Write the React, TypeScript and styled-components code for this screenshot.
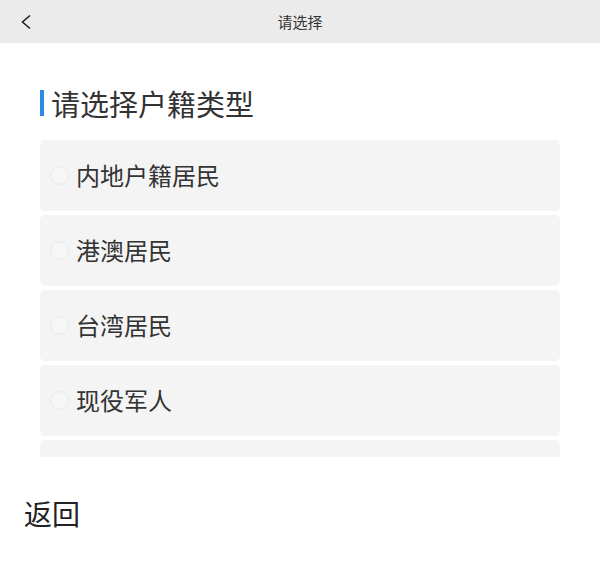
import styled, { createGlobalStyle } from "styled-components";

const GlobalStyle = createGlobalStyle`
  html, body {
    margin: 0;
    padding: 0;
    background: #fff;
    font-family: "Noto Sans CJK SC", "Noto Sans", sans-serif;
  }
`;

const Page = styled.div`
  width: 600px;
  height: 569px;
  display: flex;
  flex-direction: column;
  overflow: hidden;
`;

const Header = styled.header`
  height: 43px;
  flex-shrink: 0;
  background: #ebebeb;
  display: grid;
  grid-template-columns: 60px 1fr 60px;
  align-items: center;
`;

const BackButton = styled.button`
  border: none;
  background: none;
  padding: 0 0 0 20px;
  height: 100%;
  display: flex;
  align-items: center;
  cursor: pointer;
`;

const HeaderTitle = styled.h1`
  margin: 0;
  text-align: center;
  font-size: 15px;
  font-weight: 400;
  color: #333;
`;

const Content = styled.main`
  padding: 41px 40px 0 40px;
  display: flex;
  flex-direction: column;
`;

const SectionTitle = styled.h2`
  margin: 0 0 18px;
  display: flex;
  align-items: center;
  gap: 7px;
  font-size: 29px;
  line-height: 38px;
  font-weight: 400;
  color: #333;

  &::before {
    content: "";
    width: 4px;
    height: 26px;
    background: #2b8ae6;
  }
`;

const OptionList = styled.ul`
  list-style: none;
  margin: 0;
  padding: 0;
  height: 317px;
  overflow: hidden;
  display: flex;
  flex-direction: column;
  gap: 4px;
`;

const Option = styled.li`
  flex-shrink: 0;
  box-sizing: border-box;
  height: 71px;
  padding: 0 0 3px 10px;
  border-radius: 5px;
  background: #f4f4f4;
  display: flex;
  align-items: center;
  gap: 7px;
  font-size: 24px;
  color: #333;
  cursor: pointer;
`;

const Radio = styled.span`
  width: 17px;
  height: 17px;
  margin-top: 3px;
  border-radius: 50%;
  border: 1px solid #eaeaea;
  background: #f6f6f6;
`;

const Footer = styled.div`
  padding: 36px 24px 0;
`;

const ReturnLink = styled.a`
  font-size: 28px;
  color: #222;
  text-decoration: none;
  cursor: pointer;
`;

const options = ["内地户籍居民", "港澳居民", "台湾居民", "现役军人", "外国人"];

const App = () => {
  return (
    <>
      <GlobalStyle />
      <Page>
        <Header>
          <BackButton aria-label="返回">
            <svg width="12" height="16" viewBox="0 0 12 16" fill="none">
              <path d="M10 1.5L2.5 8L10 14.5" stroke="#222" strokeWidth="1.6" />
            </svg>
          </BackButton>
          <HeaderTitle>请选择</HeaderTitle>
          <span />
        </Header>
        <Content>
          <SectionTitle>请选择户籍类型</SectionTitle>
          <OptionList>
            {options.map((label) => (
              <Option key={label}>
                <Radio />
                {label}
              </Option>
            ))}
          </OptionList>
        </Content>
        <Footer>
          <ReturnLink>返回</ReturnLink>
        </Footer>
      </Page>
    </>
  );
};

export default App;
